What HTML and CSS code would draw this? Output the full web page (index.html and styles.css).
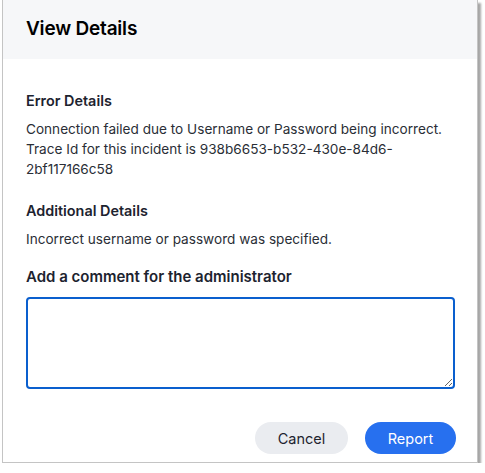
FILE: index.html
```html
<!DOCTYPE html>
<html>
<head>
<meta charset="utf-8">
<link rel="stylesheet" href="styles.css">
</head>
<body>
<div class="dialog">
  <div class="header"><h1 class="title">View Details</h1></div>
  <div class="content">
    <h2 class="section-title">Error Details</h2>
    <p class="text">Connection failed due to Username or Password being incorrect. Trace Id for this incident is 938b6653-b532-430e-84d6-2bf117166c58</p>
    <h2 class="section-title second">Additional Details</h2>
    <p class="text">Incorrect username or password was specified.</p>
    <label class="comment-label" for="c">Add a comment for the administrator</label>
    <textarea id="c" class="comment"></textarea>
  </div>
  <div class="footer">
    <button class="btn btn-secondary">Cancel</button>
    <button class="btn btn-primary">Report</button>
  </div>
</div>
</body>
</html>
```

FILE: styles.css
```css
html, body {
  margin: 0;
  padding: 0;
  background: #ffffff;
}
body {
  font-family: Inter, "Noto Sans", sans-serif;
  color: #1d232f;
}
.dialog {
  margin: 0 5px 0 2px;
  width: 476px;
  height: 463px;
  border: 1px solid #c4c4c4;
  border-top: none;
  box-shadow: 3px 3px 2px rgba(0, 0, 0, 0.35);
  background: #fff;
  display: flex;
  flex-direction: column;
  box-sizing: border-box;
}
.header {
  background: #f6f7f9;
  height: 59px;
  box-sizing: border-box;
  display: flex;
  align-items: center;
  padding: 0 23px 2px;
  flex-shrink: 0;
}
.title {
  margin: 0;
  font-size: 19px;
  font-weight: 600;
  color: #000;
  letter-spacing: -0.2px;
}
.content {
  padding: 32px 22px 0 23px;
  display: flex;
  flex-direction: column;
}
.section-title {
  margin: 0 0 8px 0;
  font-size: 14.4px;
  font-weight: 600;
  line-height: 20px;
  color: #1d232f;
}
.section-title.second {
  margin-top: 22px;
}
.text {
  margin: 0;
  font-size: 13.6px;
  line-height: 20px;
  color: #2a2e36;
}
.comment-label {
  margin-top: 18px;
  font-size: 15px;
  font-weight: 600;
  line-height: 20px;
  color: #1d232f;
}
.comment {
  margin-top: 10px;
  height: 92px;
  box-sizing: border-box;
  border: 2px solid #0a5fce;
  border-radius: 4px;
  resize: vertical;
  outline: none;
  font-family: inherit;
}
.footer {
  margin-top: auto;
  padding: 0 21px 8px 0;
  display: flex;
  justify-content: flex-end;
  gap: 17px;
}
.btn {
  height: 32px;
  border: none;
  border-radius: 16px;
  font-family: Inter, "Noto Sans", sans-serif;
  font-size: 14.5px;
  padding: 0;
}
.btn-secondary {
  width: 93px;
  background: #eaecf0;
  color: #1d232f;
}
.btn-primary {
  width: 91px;
  background: #2770ef;
  color: #fff;
}
```
